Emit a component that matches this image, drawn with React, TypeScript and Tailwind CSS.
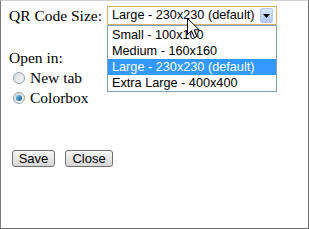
import React from "react";

const sizes = [
  { label: "Small - 100x100", active: false },
  { label: "Medium - 160x160", active: false },
  { label: "Large - 230x230 (default)", active: true },
  { label: "Extra Large - 400x400", active: false },
];

function Radio({ checked }: { checked?: boolean }) {
  return (
    <span className="ml-[4px] mr-[5px] flex h-[12px] w-[12px] items-center justify-center rounded-full border border-[#9aa3ab] bg-gradient-to-br from-[#d4d6d8] to-[#fbfbfb]">
      {checked && (
        <span className="h-[6px] w-[6px] rounded-full bg-gradient-to-br from-[#6fc1ee] to-[#1d5d8c]" />
      )}
    </span>
  );
}

function Button({ label, width }: { label: string; width: string }) {
  return (
    <button
      className={`${width} flex h-[17px] items-center justify-center rounded-[3px] border border-[#707070] bg-gradient-to-b from-[#f6f6f6] to-[#d6d6d6] text-[13px] leading-[15px] text-black`}
      style={{ fontFamily: '"Liberation Sans", Arial, sans-serif' }}
    >
      {label}
    </button>
  );
}

export default function App() {
  return (
    <div
      className="relative h-[229px] w-[309px] border border-t-[#cfcfcf] border-l-[#7a7a7a] border-r-[#6b6b6b] border-b-[#6b6b6b] bg-white pl-[8px] pt-[5px] text-black"
      style={{ fontFamily: '"Liberation Serif", "Times New Roman", serif' }}
    >
      {/* size row */}
      <div className="flex h-[19px] items-center">
        <span className="w-[98px] text-[15.5px] leading-[19px]">QR Code Size:</span>
        <div
          className="flex h-[19px] w-[170px] items-center justify-between border border-[#d6b36a] bg-white pl-[4px] pr-[3px] text-[12.7px] leading-[17px]"
          style={{ fontFamily: '"Liberation Sans", Arial, sans-serif' }}
        >
          <span>Large - 230x230 (default)</span>
          <span className="flex h-[15px] w-[13px] items-center justify-center rounded-[2px] border border-[#b5c9ee] bg-gradient-to-b from-[#d7e4fc] to-[#b2c9f5]">
            <svg width="7" height="4" viewBox="0 0 7 4">
              <path d="M0 0 H7 L3.5 4 Z" fill="#000" />
            </svg>
          </span>
        </div>
      </div>

      <div className="mt-[23px] text-[15.5px] leading-[20px]">Open in:</div>
      <label className="flex h-[20px] items-center text-[15.5px] leading-[20px]">
        <Radio />
        New tab
      </label>
      <label className="flex h-[20px] items-center text-[15.5px] leading-[20px]">
        <Radio checked />
        Colorbox
      </label>

      <div className="ml-[3px] mt-[42px] flex gap-[10px]">
        <Button label="Save" width="w-[43px]" />
        <Button label="Close" width="w-[48px]" />
      </div>

      {/* open dropdown list */}
      <ul
        className="absolute left-[106px] top-[24px] w-[170px] border border-[#7f9db9] bg-white pt-[1px] text-[12.7px] leading-[16px]"
        style={{ fontFamily: '"Liberation Sans", Arial, sans-serif' }}
      >
        {sizes.map((s) => (
          <li
            key={s.label}
            className={`h-[16px] pl-[4px] ${s.active ? "bg-[#3399ff] text-white" : "text-black"}`}
          >
            {s.label}
          </li>
        ))}
      </ul>

      {/* mouse pointer */}
      <svg
        className="absolute left-[186px] top-[17px]"
        width="13"
        height="21"
        viewBox="0 0 13 21"
      >
        <path
          d="M0.5 0.5 L0.5 16.5 L4.5 12.8 L7.3 19.5 L9.8 18.4 L7.1 11.8 L12.3 11.8 Z"
          fill="#fff"
          stroke="#000"
          strokeWidth="1"
          strokeLinejoin="miter"
        />
      </svg>
    </div>
  );
}
